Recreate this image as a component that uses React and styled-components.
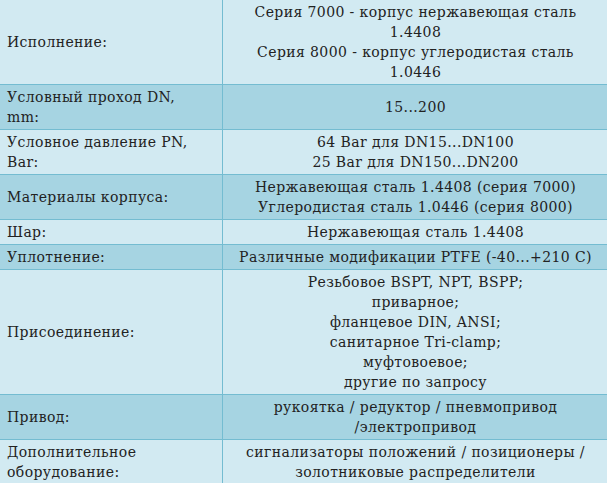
import React from "react";
import styled, { createGlobalStyle } from "styled-components";

const Global = createGlobalStyle`
  html, body { margin: 0; padding: 0; background: #d2eaf2; overflow: hidden; }
  body { width: 607px; height: 483px; }
`;

const Frame = styled.div`
  width: 607px;
  height: 483px;
  overflow: hidden;
`;

const Table = styled.table`
  border-collapse: collapse;
  width: 610px;
  margin: -1px 0 0 -1px;
  table-layout: fixed;
  font-family: "DejaVu Serif", serif;
  font-size: 14px;
  letter-spacing: 0.4px;
  line-height: 20px;
  color: #222;
`;

const Row = styled.tr`
  background: ${(p) => (p.$dark ? "#a6d4e2" : "#d2eaf2")};
`;

const Label = styled.td`
  width: 196px;
  border: 1px solid #74bcd1;
  padding: 2px 19px 2px 7px;
  text-align: left;
  vertical-align: middle;
`;

const Value = styled.td`
  border: 1px solid #74bcd1;
  padding: 2px 7px;
  text-align: center;
  vertical-align: middle;
`;

const rows = [
  ["Исполнение:", ["Серия 7000 - корпус нержавеющая сталь", "1.4408", "Серия 8000 - корпус углеродистая сталь", "1.0446"]],
  ["Условный проход DN, mm:", ["15...200"]],
  ["Условное давление PN, Bar:", ["64 Bar для DN15...DN100", "25 Bar для DN150...DN200"]],
  ["Материалы корпуса:", ["Нержавеющая сталь 1.4408 (серия 7000)", "Углеродистая сталь 1.0446 (серия 8000)"]],
  ["Шар:", ["Нержавеющая сталь 1.4408"]],
  ["Уплотнение:", ["Различные модификации PTFE (-40...+210 C)"]],
  ["Присоединение:", ["Резьбовое BSPT, NPT, BSPP;", "приварное;", "фланцевое DIN, ANSI;", "санитарное Tri-clamp;", "муфтовоевое;", "другие по запросу"]],
  ["Привод:", ["рукоятка / редуктор / пневмопривод", "/электропривод"]],
  ["Дополнительное оборудование:", ["сигнализаторы положений / позиционеры /", "золотниковые распределители"]],
];

export default function App() {
  return (
    <Frame>
      <Global />
      <Table>
        <tbody>
          {rows.map(([label, lines], i) => (
            <Row key={i} $dark={i % 2 === 1}>
              <Label>{label}</Label>
              <Value>
                {lines.map((l, j) => (
                  <React.Fragment key={j}>
                    {j > 0 && <br />}
                    {l}
                  </React.Fragment>
                ))}
              </Value>
            </Row>
          ))}
        </tbody>
      </Table>
    </Frame>
  );
}
